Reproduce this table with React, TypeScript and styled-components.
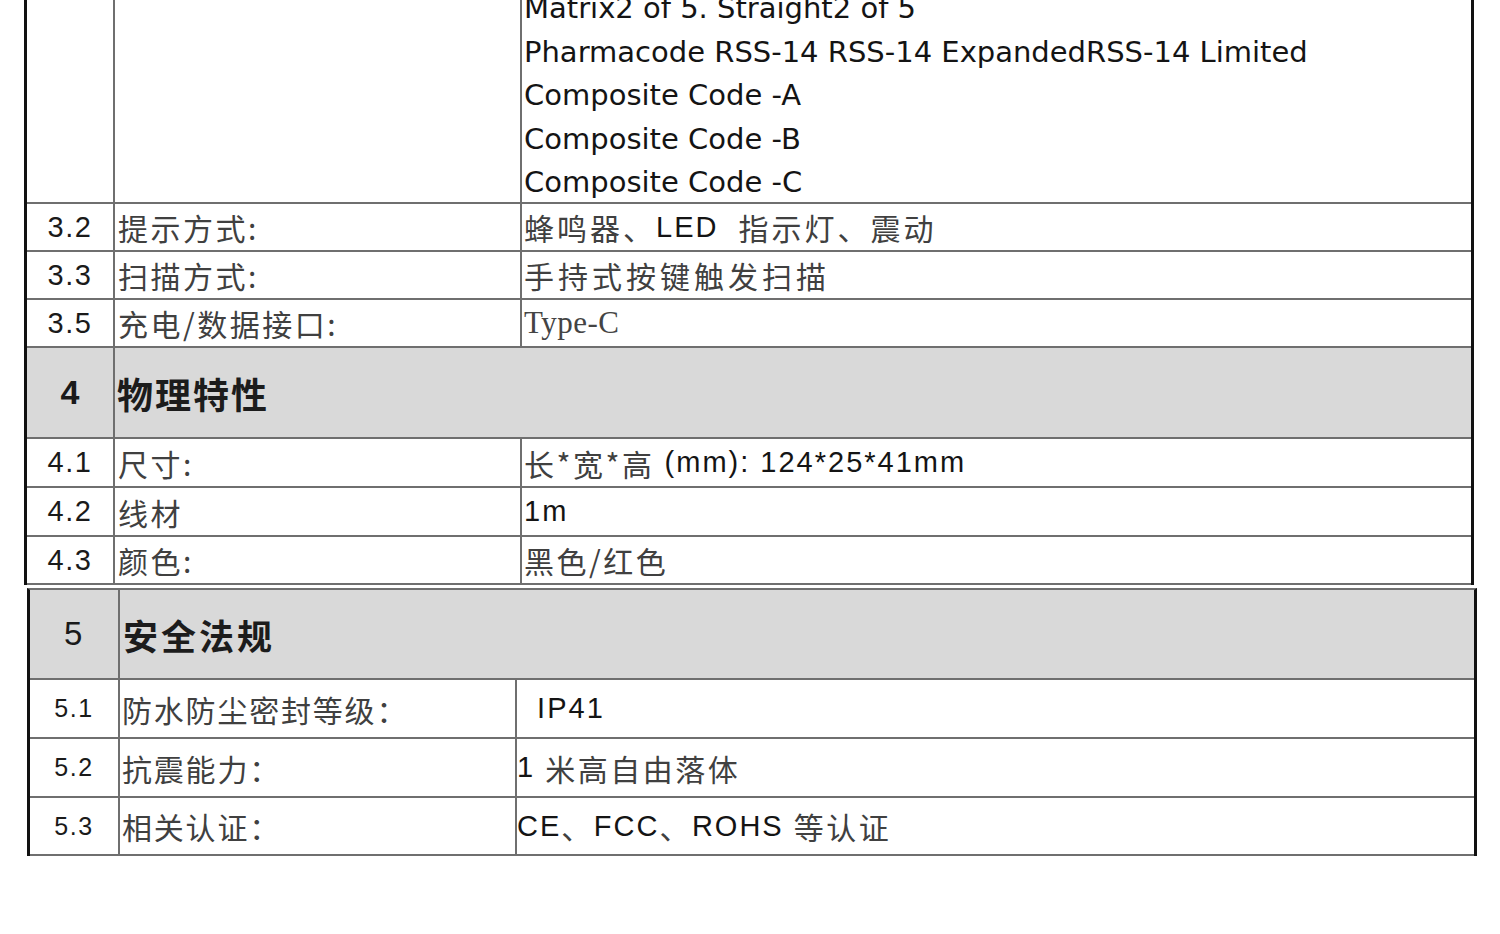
import React from "react";
import styled, { createGlobalStyle } from "styled-components";

const GlobalStyle = createGlobalStyle`
  html, body {
    margin: 0;
    padding: 0;
    background: #ffffff;
    overflow: hidden;
  }
  body {
    font-family: "Noto Sans CJK SC", "Liberation Sans", sans-serif;
  }
`;

const LINE = "#6f6f6f";
const HEAD_BG = "#d9d9d9";

const Page = styled.div`
  display: flex;
  flex-direction: column;
  width: 1500px;
  height: 934px;
`;

const Table = styled.section<{ $left: number; $top: number; $topLine?: boolean }>`
  display: flex;
  flex-direction: column;
  width: 1450px;
  box-sizing: border-box;
  margin-left: ${(p) => p.$left}px;
  margin-top: ${(p) => p.$top}px;
  border-left: 3px solid #111;
  border-right: 3px solid #111;
  border-top: ${(p) => (p.$topLine ? `2px solid ${LINE}` : "none")};
`;

const Row = styled.div<{ $h: number; $cols: string; $shade?: boolean }>`
  display: grid;
  grid-template-columns: ${(p) => p.$cols};
  height: ${(p) => p.$h}px;
  box-sizing: border-box;
  border-bottom: 2px solid ${LINE};
  background: ${(p) => (p.$shade ? HEAD_BG : "#ffffff")};
`;

const NumCell = styled.div<{ $size: number; $bold?: boolean }>`
  display: flex;
  align-items: center;
  justify-content: center;
  font-family: "Liberation Sans", Arial, sans-serif;
  font-size: ${(p) => p.$size}px;
  font-weight: ${(p) => (p.$bold ? 700 : 400)};
  letter-spacing: ${(p) => (p.$bold ? 0 : 1.5)}px;
  color: #1a1a1a;
`;

const TextCell = styled.div<{ $pad: number; $ls?: number; $span?: boolean }>`
  display: flex;
  align-items: center;
  grid-column: ${(p) => (p.$span ? "2 / 4" : "auto")};
  border-left: 2px solid ${LINE};
  padding-left: ${(p) => p.$pad}px;
  font-family: "Noto Sans CJK SC", sans-serif;
  font-size: 30px;
  font-weight: 400;
  letter-spacing: ${(p) => p.$ls ?? 2.5}px;
  color: #404040;
  white-space: pre;
`;

const Title = styled.span<{ $size: number; $ls: number }>`
  font-family: "Noto Sans CJK SC", sans-serif;
  font-weight: 700;
  font-size: ${(p) => p.$size}px;
  letter-spacing: ${(p) => p.$ls}px;
  color: #1c1c1c;
`;

const Latin = styled.span`
  font-family: "Liberation Sans", Arial, sans-serif;
  font-size: 29px;
  font-weight: 400;
  letter-spacing: 2px;
  color: #141414;
`;

const Serif = styled.span`
  font-family: "Liberation Serif", "Times New Roman", serif;
  font-size: 31px;
  letter-spacing: 0.5px;
  color: #444;
`;

const CodeList = styled.div`
  display: flex;
  flex-direction: column;
  border-left: 2px solid ${LINE};
  padding-left: 2px;
  font-family: "DejaVu Sans", Verdana, sans-serif;
  font-size: 29px;
  line-height: 43.5px;
  color: #141414;
  white-space: nowrap;
`;

const Blank = styled.div`
  border-left: 2px solid ${LINE};
`;

type Spec = {
  num: string;
  label: string;
  value: React.ReactNode;
  h: number;
  labelLs?: number;
  valueLs?: number;
};

const COLS_A = "86px 407px 1fr";
const COLS_B = "88px 397px 1fr";

const codes = [
  "Matrix2 of 5. Straight2 of 5",
  "Pharmacode RSS-14 RSS-14 ExpandedRSS-14 Limited",
  "Composite Code -A",
  "Composite Code -B",
  "Composite Code -C",
];

const readRows: Spec[] = [
  {
    num: "3.2",
    label: "提示方式:",
    value: (
      <>
        蜂鸣器、<Latin>{"LED\u00a0\u00a0"}</Latin>指示灯、震动
      </>
    ),
    h: 48,
    valueLs: 3,
  },
  { num: "3.3", label: "扫描方式:", value: "手持式按键触发扫描", h: 48, valueLs: 4 },
  { num: "3.5", label: "充电/数据接口:", value: <Serif>Type-C</Serif>, h: 48 },
];

const physRows: Spec[] = [
  {
    num: "4.1",
    label: "尺寸:",
    value: (
      <>
        长*宽*高<Latin>{" (mm): 124*25*41mm"}</Latin>
      </>
    ),
    h: 49,
  },
  { num: "4.2", label: "线材", value: <Latin>1m</Latin>, h: 49 },
  { num: "4.3", label: "颜色:", value: "黑色/红色", h: 48 },
];

const safetyRows: Spec[] = [
  {
    num: "5.1",
    label: "防水防尘密封等级：",
    value: <Latin>{"\u00a0\u00a0IP41"}</Latin>,
    h: 59,
    labelLs: 1.8,
  },
  {
    num: "5.2",
    label: "抗震能力：",
    value: (
      <>
        <Latin>{"1 "}</Latin>米高自由落体
      </>
    ),
    h: 59,
    labelLs: 1.8,
  },
  {
    num: "5.3",
    label: "相关认证：",
    value: (
      <>
        <Latin>CE</Latin>、<Latin>FCC</Latin>、<Latin>{"ROHS "}</Latin>等认证
      </>
    ),
    h: 58,
    labelLs: 1.8,
  },
];

function SpecRow({
  spec,
  cols,
  numSize,
  labelPad,
  valuePad,
}: {
  spec: Spec;
  cols: string;
  numSize: number;
  labelPad: number;
  valuePad: number;
}) {
  return (
    <Row $h={spec.h} $cols={cols}>
      <NumCell $size={numSize}>{spec.num}</NumCell>
      <TextCell $pad={labelPad} $ls={spec.labelLs}>
        {spec.label}
      </TextCell>
      <TextCell $pad={valuePad} $ls={spec.valueLs}>
        {spec.value}
      </TextCell>
    </Row>
  );
}

export default function App() {
  return (
    <>
      <GlobalStyle />
      <Page>
        <Table $left={24} $top={-13}>
          <Row $h={217} $cols={COLS_A}>
            <NumCell $size={28} />
            <Blank />
            <CodeList>
              {codes.map((c) => (
                <span key={c}>{c}</span>
              ))}
            </CodeList>
          </Row>
          {readRows.map((r) => (
            <SpecRow key={r.num} spec={r} cols={COLS_A} numSize={29} labelPad={3} valuePad={2} />
          ))}
          <Row $h={91} $cols={COLS_A} $shade>
            <NumCell $size={34} $bold>
              4
            </NumCell>
            <TextCell $pad={2} $span>
              <Title $size={36} $ls={2}>
                物理特性
              </Title>
            </TextCell>
          </Row>
          {physRows.map((r) => (
            <SpecRow key={r.num} spec={r} cols={COLS_A} numSize={29} labelPad={3} valuePad={2} />
          ))}
        </Table>

        <Table $left={27} $top={3} $topLine>
          <Row $h={90} $cols={COLS_B} $shade>
            <NumCell $size={33}>5</NumCell>
            <TextCell $pad={3} $span>
              <Title $size={35} $ls={3}>
                安全法规
              </Title>
            </TextCell>
          </Row>
          {safetyRows.map((r) => (
            <SpecRow key={r.num} spec={r} cols={COLS_B} numSize={25} labelPad={2} valuePad={0} />
          ))}
        </Table>
      </Page>
    </>
  );
}
